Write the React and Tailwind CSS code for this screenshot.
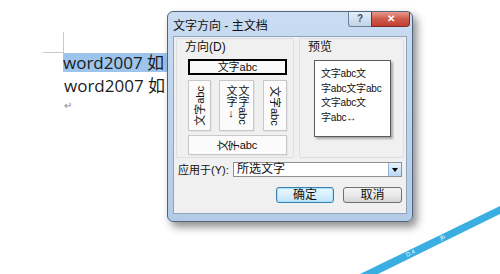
import React from 'react'

const cjk = "font-['Liberation_Sans','Noto_Sans_CJK_SC',sans-serif]"

function OptionBox({ className = '', children }) {
  return (
    <div
      className={`flex items-center justify-center border border-[#c8c8c8] bg-[#fbfbfb] shadow-[1px_1px_0_#e4e4e4] ${className}`}
    >
      {children}
    </div>
  )
}

function Dialog() {
  return (
    <div
      className={`absolute left-[167px] top-[11px] w-[246px] h-[211px] rounded-[6px] border border-[#4f6580] bg-gradient-to-b from-[#c9dcf2] via-[#bfd3ec] to-[#b3cbe6] shadow-[4px_5px_9px_rgba(0,0,0,0.45)] ${cjk}`}
    >
      {/* title bar */}
      <div className="relative h-[24px] flex items-center pl-[5px] pt-[3px]">
        <span className="text-[12px] leading-[14px] text-[#111]">文字方向 - 主文档</span>
        <div className="absolute left-[180px] top-0 w-[24px] h-[15px] rounded-bl-[3px] border border-t-0 border-[#6b7f99] bg-gradient-to-b from-[#e6eef8] to-[#c3d3e6] flex items-center justify-center">
          <span className="text-[10px] leading-none font-bold text-[#3d4f66]">?</span>
        </div>
        <div className="absolute left-[203px] top-0 w-[39px] h-[15px] rounded-br-[4px] border border-t-0 border-[#7a2d2d] bg-gradient-to-b from-[#e69a8c] via-[#cf5a4a] to-[#c23f30] flex items-center justify-center">
          <span className="text-[10px] leading-none font-bold text-white">✕</span>
        </div>
      </div>

      {/* client area */}
      <div className="ml-[5px] w-[234px] h-[178px] border border-[#8ea4bf] bg-[#f0f0f0] pl-[1px] pt-[1px] text-[#111]">
        <div className="flex">
          {/* direction group */}
          <div className="ml-[1px] w-[118px] h-[120px] border border-[#d9dfe5] rounded-[2px] pl-[11px]">
            <div className="h-[14px] mt-[1px] -ml-[3px] text-[12px] leading-[14px]">方向(D)</div>
            <div className="mt-[5px] w-[99px] h-[16px] border-2 border-black bg-[#fafafa] flex items-center justify-center text-[11px] leading-none">
              文字abc
            </div>
            <div className="mt-[5px] h-[51px] flex">
              <OptionBox className="w-[23px] h-full">
                <span className="rotate-180 [writing-mode:vertical-rl] [text-orientation:sideways] whitespace-nowrap text-[11px] leading-[12px]">文字abc</span>
              </OptionBox>
              <OptionBox className="ml-[8px] w-[35px] h-full gap-[1px] items-start pt-[4px]">
                <span className="[writing-mode:vertical-rl] [text-orientation:upright] text-[11px] leading-[11px]">文字↓</span>
                <span className="[writing-mode:vertical-rl] text-[11px] leading-[11px]">文字abc</span>
              </OptionBox>
              <OptionBox className="ml-[9px] w-[24px] h-full">
                <span className="[writing-mode:vertical-rl] [text-orientation:sideways] whitespace-nowrap text-[11px] leading-[12px]">文字abc</span>
              </OptionBox>
            </div>
            <OptionBox className="mt-[4px] w-[99px] h-[20px]">
              <span className="text-[11px] leading-none flex items-center">
                <span className="inline-block -rotate-90">文</span>
                <span className="inline-block -rotate-90">字</span>
                abc
              </span>
            </OptionBox>
          </div>

          {/* preview group */}
          <div className="ml-[5px] w-[105px] h-[120px] border border-[#d9dfe5] rounded-[2px] pl-[14px]">
            <div className="h-[14px] mt-[1px] -ml-[6px] text-[12px] leading-[14px]">预览</div>
            <div className="mt-[6px] w-[77px] h-[77px] border border-[#5a5a5a] bg-white shadow-[2px_2px_2px_rgba(0,0,0,0.3)] pl-[6px] pt-[6px] text-[10px] leading-[14.5px] tracking-[-0.2px]">
              <div>文字abc文</div>
              <div className="whitespace-nowrap">字abc文字abc</div>
              <div>文字abc文</div>
              <div>字abc↔</div>
            </div>
          </div>
        </div>

        {/* apply to */}
        <div className="mt-[4px] flex items-center h-[15px]">
          <span className="ml-[3px] w-[55px] flex-none whitespace-nowrap text-[11px] leading-[14px]">应用于(Y):</span>
          <div className="w-[169px] flex-none h-[15px] border border-[#8f8f8f] bg-white flex items-center">
            <span className="pl-[3px] flex-1 text-[12px] leading-[13px]">所选文字</span>
            <div className="w-[13px] h-[13px] border-l border-[#8fb4d8] bg-gradient-to-b from-[#e8f3fc] to-[#b9d8f2] flex items-center justify-center">
              <div className="w-0 h-0 border-l-[3px] border-r-[3px] border-t-[4px] border-l-transparent border-r-transparent border-t-black" />
            </div>
          </div>
        </div>

        {/* buttons */}
        <div className="mt-[10px] flex pl-[101px] gap-[9px]">
          <div className="w-[58px] h-[16px] rounded-[3px] border border-[#3c7fb1] bg-gradient-to-b from-[#eaf6fd] via-[#d9effc] to-[#bee6fd] shadow-[inset_0_0_0_1px_#a9e3fb] flex items-center justify-center text-[12px] leading-none">
            确定
          </div>
          <div className="w-[59px] h-[16px] rounded-[3px] border border-[#707070] bg-gradient-to-b from-[#f2f2f2] via-[#ebebeb] to-[#d5d5d5] flex items-center justify-center text-[12px] leading-none">
            取消
          </div>
        </div>
      </div>
    </div>
  )
}

export default function App() {
  return (
    <div className="relative w-[500px] h-[274px] overflow-hidden bg-white">
      {/* document page */}
      <div className="pt-[32px] font-['Open_Sans','Noto_Sans_CJK_SC',sans-serif] text-[#1c1c1c]">
        <div className="ml-[43px] w-[21px] h-[21px] border-r border-b border-[#c9c9c9]" />
        <div className="ml-[63px] w-[110px] h-[19px] bg-[#9cc4ec] text-[17px] leading-[19px] whitespace-nowrap">
          word2007 如
        </div>
        <div className="ml-[64px] mt-[4px] h-[19px] text-[17px] leading-[19px] whitespace-nowrap">
          word2007 如
        </div>
        <div className="ml-[64px] mt-[5px] text-[10px] leading-none text-[#888]">↵</div>
      </div>

      <Dialog />

      {/* decorative blue stripe */}
      <svg className="absolute inset-0 pointer-events-none" width="500" height="274" viewBox="0 0 500 274">
        <polygon points="360,274 500,206 500,214 378,274" fill="#3aaee0" />
        <text x="407" y="257" fontSize="6" fill="#fff" fontFamily="Liberation Sans" transform="rotate(-26 407 257)">D.4</text>
        <text x="441" y="240" fontSize="6" fill="#fff" fontFamily="Liberation Sans" transform="rotate(-26 441 240)">jb</text>
      </svg>
    </div>
  )
}
